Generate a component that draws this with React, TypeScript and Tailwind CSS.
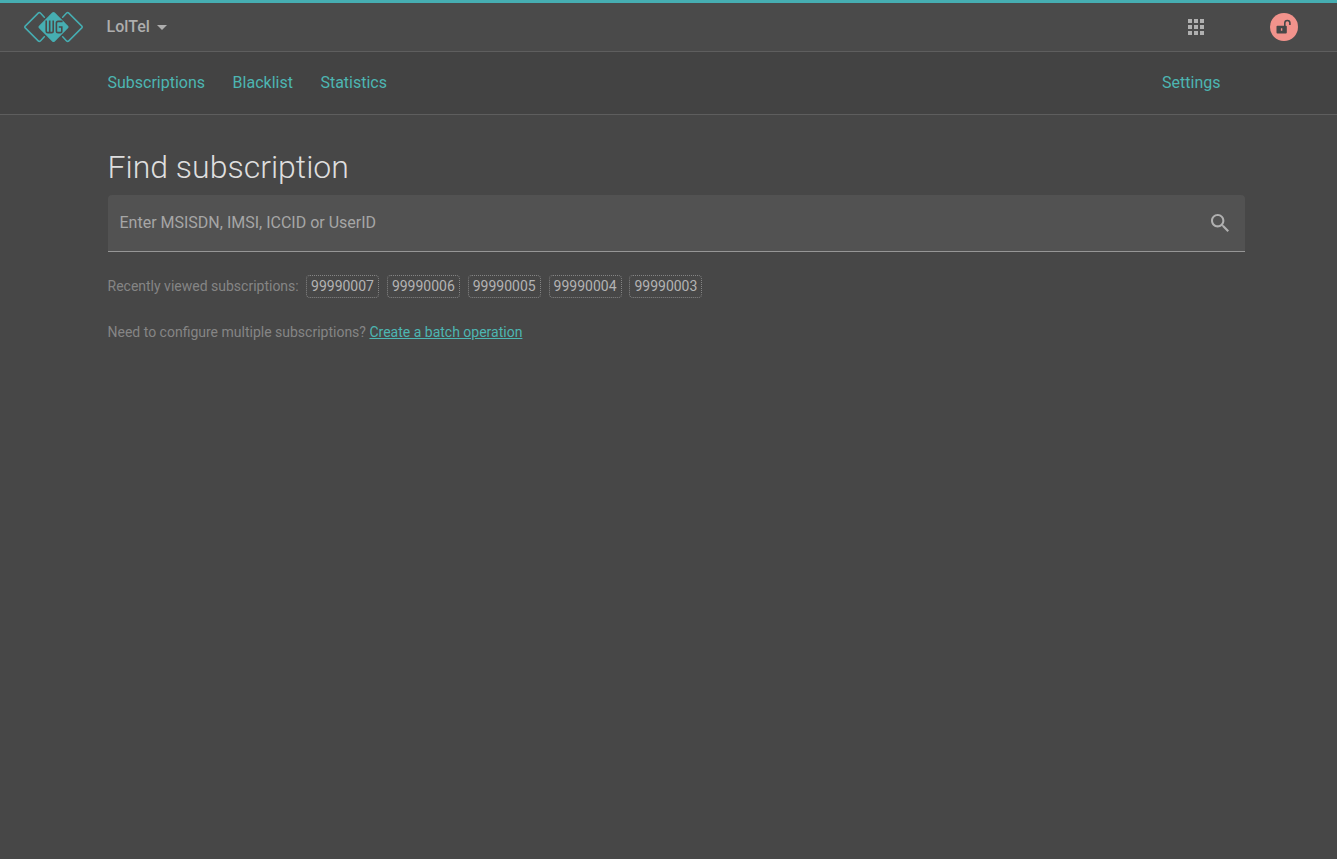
import React from 'react';

const recent = ['99990007', '99990006', '99990005', '99990004', '99990003'];

function Logo() {
  return (
    <svg width="60" height="32" viewBox="0 0 60 32" fill="none" aria-label="WG">
      <g stroke="#46aeb2" strokeWidth="1.5" strokeLinejoin="round" strokeLinecap="round">
        <path d="M20.3 6.2 16.4 2.1Q15.3 1 14.2 2.1L1.2 15.1Q.3 16 1.2 16.9L14.2 29.9Q15.3 31 16.4 29.9L20.3 25.8" />
        <path d="M38.7 6.2 42.6 2.1Q43.7 1 44.8 2.1L57.8 15.1Q58.7 16 57.8 16.9L44.8 29.9Q43.7 31 42.6 29.9L38.7 25.8" />
      </g>
      <path d="M28.2 1.5Q29.5.4 30.8 1.5L44.2 14.9Q45.1 16 44.2 17.1L30.8 30.5Q29.5 31.6 28.2 30.5L14.8 17.1Q13.9 16 14.8 14.9Z" fill="#46aeb2" />
      <path d="M22.2 9.6V19.9Q22.2 21.6 23.9 21.6H27.5Q29.2 21.6 29.2 19.9V9.6M25.7 9.6V21.4M38.6 10.4H34.1Q32.4 10.4 32.4 12.1V19.9Q32.4 21.6 34.1 21.6H36.1Q37.8 21.6 37.8 19.9V16H34.8" stroke="#4a4a4a" strokeWidth="1.6" />
    </svg>
  );
}

export default function App() {
  return (
    <div className="flex min-h-screen flex-col bg-[#474747] font-['Roboto',sans-serif] text-[#b3b3b3]">
      <header className="flex h-[52px] items-center border-t-[3px] border-b border-t-[#46aeb2] border-b-[#5e5e5e] bg-[#4a4a4a] pr-[39px] pl-6">
        <Logo />
        <button className="ml-[22.5px] flex items-center gap-[7px] text-base leading-6 font-medium text-[#aeaeae]">
          LolTel
          <svg width="10" height="5" viewBox="0 0 10 5" fill="currentColor"><path d="M0 0h10L5 5z" /></svg>
        </button>
        <svg className="ml-auto" width="16" height="16" viewBox="0 0 16 16" fill="#b0b0b0">
          <path d="M0 0h4v4H0zM6 0h4v4H6zM12 0h4v4h-4zM0 6h4v4H0zM6 6h4v4H6zM12 6h4v4h-4zM0 12h4v4H0zM6 12h4v4H6zM12 12h4v4h-4z" />
        </svg>
        <span className="ml-[66px] flex size-7 items-center justify-center rounded-full bg-[#f2938c]">
          <svg width="16" height="16" viewBox="0 0 16 16" fill="none">
            <path d="M8.8 7.5V4.1a2.55 2.55 0 0 1 5.1 0V6" stroke="#474747" strokeWidth="1.6" />
            <path fillRule="evenodd" d="M1.4 6.7H9.9Q10.8 6.7 10.8 7.6V13.5Q10.8 14.4 9.9 14.4H1.4Q.5 14.4 .5 13.5V7.6Q.5 6.7 1.4 6.7ZM4.9 9.3V11.8H6.3V9.3Z" fill="#474747" />
          </svg>
        </span>
      </header>
      <nav className="flex h-[63px] items-center gap-[27.5px] border-b border-[#5e5e5e] bg-[#434343] pr-[116.5px] pl-[107.5px] text-base leading-6 text-[#4db6b2]">
        <a>Subscriptions</a>
        <a>Blacklist</a>
        <a>Statistics</a>
        <a className="ml-auto">Settings</a>
      </nav>
      <main className="flex flex-col pt-8 pr-[92px] pl-[107.5px]">
        <h1 className="text-[32px] leading-10 font-light text-[#dedede]">Find subscription</h1>
        <div className="mt-2 flex h-[57px] items-center justify-between rounded-t border-b border-[#969696] bg-[#525252] pr-4 pl-3">
          <span className="text-base leading-6 text-[#a6a6a6]">Enter MSISDN, IMSI, ICCID or UserID</span>
          <svg width="18" height="18" viewBox="3 3 17.49 17.49" fill="#b0b0b0">
            <path d="M15.5 14h-.79l-.28-.27C15.41 12.59 16 11.11 16 9.5 16 5.91 13.09 3 9.5 3S3 5.91 3 9.5 5.91 16 9.5 16c1.61 0 3.09-.59 4.23-1.57l.27.28v.79l5 4.99L20.49 19l-4.99-5zm-6 0C7.01 14 5 11.99 5 9.5S7.01 5 9.5 5 14 7.01 14 9.5 11.99 14 9.5 14z" />
          </svg>
        </div>
        <div className="mt-[23px] flex items-center gap-[7.9px] text-sm leading-[21px] text-[#858585]">
          <span className="-mr-[0.6px]">Recently viewed subscriptions:</span>
          {recent.map((n) => (
            <a key={n} className="rounded border border-dotted border-[#858585] px-1 text-[#b3b3b3]">{n}</a>
          ))}
        </div>
        <p className="mt-6 text-sm leading-5 text-[#858585]">
          Need to configure multiple subscriptions? <a className="text-[#4db6b2] underline">Create a batch operation</a>
        </p>
      </main>
    </div>
  );
}
